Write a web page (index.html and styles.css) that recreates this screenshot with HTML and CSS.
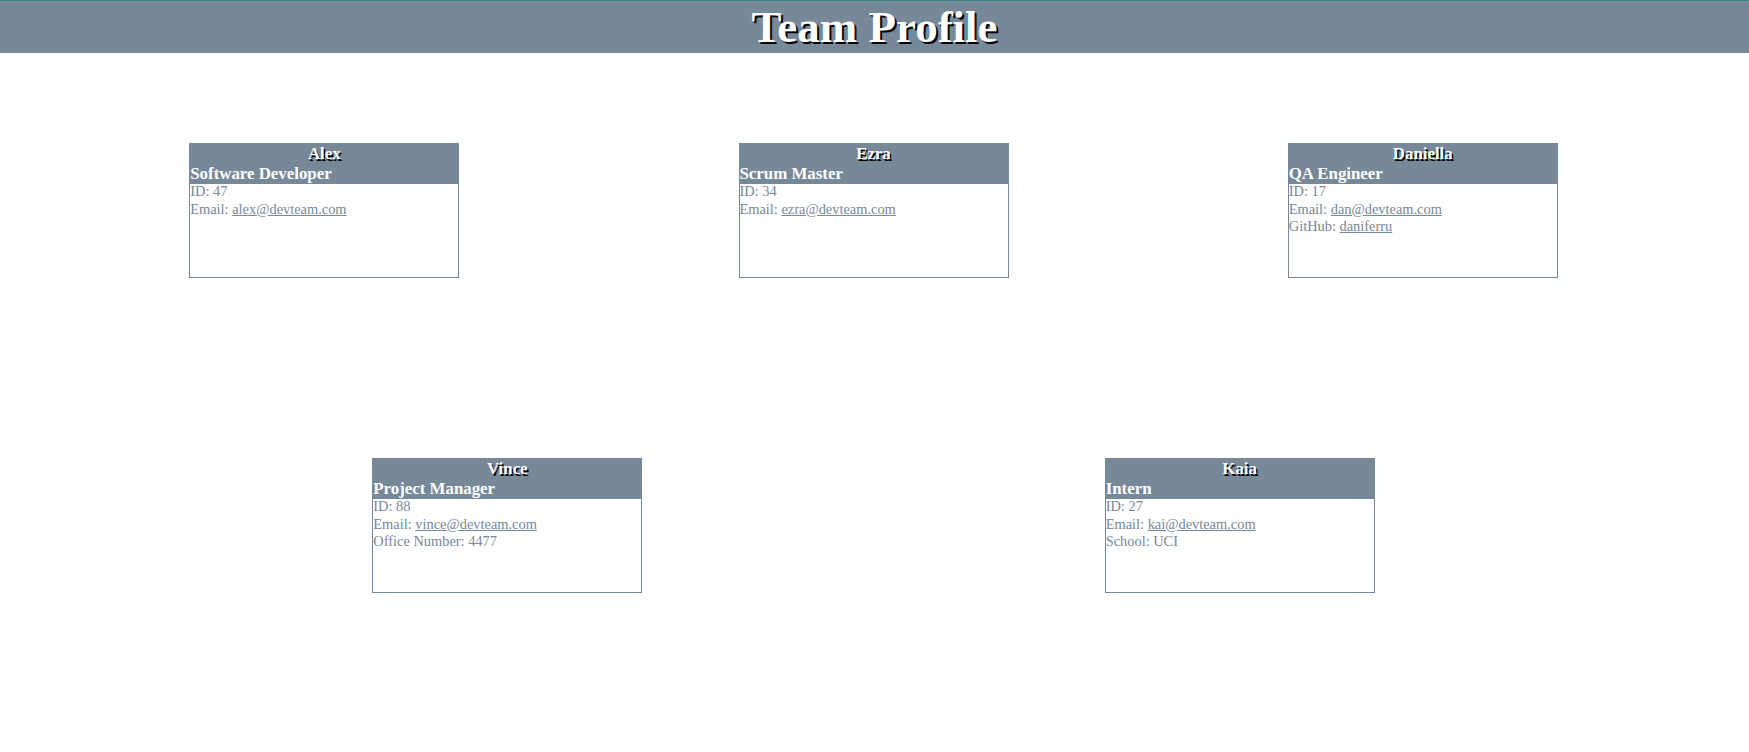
FILE: index.html
```html
<!DOCTYPE html>
<html>
<head>
<meta charset="utf-8">
<title>Team Profile</title>
<link rel="stylesheet" href="styles.css">
</head>
<body>
<header class="top">
  <h1 class="title">Team Profile</h1>
</header>
<main class="team">
  <div class="card">
    <div class="card-head">
      <h3 class="name">Alex</h3>
      <h3 class="role">Software Developer</h3>
    </div>
    <div class="card-body">
      <div>ID: 47</div>
      <div>Email: <a href="#">alex@devteam.com</a></div>
    </div>
  </div>
  <div class="card">
    <div class="card-head">
      <h3 class="name">Ezra</h3>
      <h3 class="role">Scrum Master</h3>
    </div>
    <div class="card-body">
      <div>ID: 34</div>
      <div>Email: <a href="#">ezra@devteam.com</a></div>
    </div>
  </div>
  <div class="card">
    <div class="card-head">
      <h3 class="name">Daniella</h3>
      <h3 class="role">QA Engineer</h3>
    </div>
    <div class="card-body">
      <div>ID: 17</div>
      <div>Email: <a href="#">dan@devteam.com</a></div>
      <div>GitHub: <a href="#">daniferru</a></div>
    </div>
  </div>
  <div class="card">
    <div class="card-head">
      <h3 class="name">Vince</h3>
      <h3 class="role">Project Manager</h3>
    </div>
    <div class="card-body">
      <div>ID: 88</div>
      <div>Email: <a href="#">vince@devteam.com</a></div>
      <div>Office Number: 4477</div>
    </div>
  </div>
  <div class="card">
    <div class="card-head">
      <h3 class="name">Kaia</h3>
      <h3 class="role">Intern</h3>
    </div>
    <div class="card-body">
      <div>ID: 27</div>
      <div>Email: <a href="#">kai@devteam.com</a></div>
      <div>School: UCI</div>
    </div>
  </div>
</main>
</body>
</html>
```
FILE: styles.css
```css
html, body {
  margin: 0;
  padding: 0;
  background: #ffffff;
}
body {
  font-family: "Liberation Serif", "Times New Roman", serif;
  color: #778899;
}
.top {
  background: #778899;
  border-top: 1px solid #3f8787;
  height: 52px;
}
.title {
  margin: 0;
  font-size: 45px;
  line-height: 52px;
  font-weight: bold;
  text-align: center;
  color: #ffffff;
  text-shadow: 2px 2px 0 #000000;
}
.team {
  display: flex;
  flex-wrap: wrap;
  justify-content: space-evenly;
  padding-right: 2px;
}
.card {
  box-sizing: border-box;
  width: 270px;
  height: 135px;
  margin: 90px;
  border: 1px solid #778899;
}
.card-head {
  background: #778899;
  color: #ffffff;
}
.card-head h3 {
  margin: 0;
  font-size: 16.85px;
  font-weight: bold;
}
.name {
  text-align: center;
  text-shadow: 1.5px 1.5px 0 #000000;
}
.role {
  text-align: left;
}
.card-body {
  font-size: 14.4px;
  line-height: 17.5px;
  margin-top: -1px;
}
.card-body a {
  color: #778899;
  text-decoration: underline;
}
```
